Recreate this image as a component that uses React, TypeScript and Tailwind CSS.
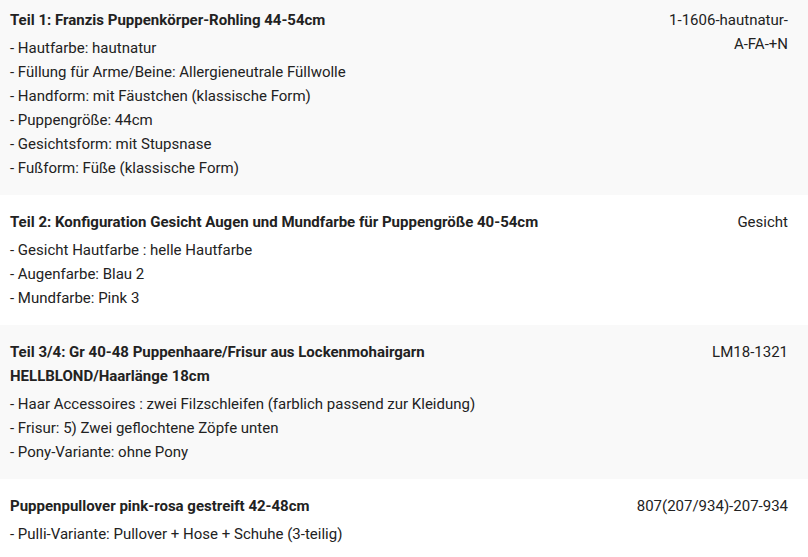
import React from 'react';

interface Part {
  title: string[];
  items: string[];
  code: string[];
}

const parts: Part[] = [
  {
    title: ['Teil 1: Franzis Puppenkörper-Rohling 44-54cm'],
    items: [
      '- Hautfarbe: hautnatur',
      '- Füllung für Arme/Beine: Allergieneutrale Füllwolle',
      '- Handform: mit Fäustchen (klassische Form)',
      '- Puppengröße: 44cm',
      '- Gesichtsform: mit Stupsnase',
      '- Fußform: Füße (klassische Form)',
    ],
    code: ['1-1606-hautnatur-', 'A-FA-+N'],
  },
  {
    title: ['Teil 2: Konfiguration Gesicht Augen und Mundfarbe für Puppengröße 40-54cm'],
    items: ['- Gesicht Hautfarbe : helle Hautfarbe', '- Augenfarbe: Blau 2', '- Mundfarbe: Pink 3'],
    code: ['Gesicht'],
  },
  {
    title: ['Teil 3/4: Gr 40-48 Puppenhaare/Frisur aus Lockenmohairgarn', 'HELLBLOND/Haarlänge 18cm'],
    items: [
      '- Haar Accessoires : zwei Filzschleifen (farblich passend zur Kleidung)',
      '- Frisur: 5) Zwei geflochtene Zöpfe unten',
      '- Pony-Variante: ohne Pony',
    ],
    code: ['LM18-1321'],
  },
  {
    title: ['Puppenpullover pink-rosa gestreift 42-48cm'],
    items: ['- Pulli-Variante: Pullover + Hose + Schuhe (3-teilig)'],
    code: ['807(207/934)-207-934'],
  },
];

const App: React.FC = () => {
  return (
    <div
      className="w-[808px] h-[557px] overflow-hidden bg-white text-[15px] leading-[24px] text-[#222222]"
      style={{ fontFamily: 'Roboto, "Liberation Sans", sans-serif' }}
    >
      <div className="-mt-[7px]">
        {parts.map((part, i) => (
          <div
            key={i}
            className={`flex justify-between py-[15px] pl-[10px] pr-[20px] ${i % 2 === 0 ? 'bg-[#f9f9f9]' : 'bg-white'}`}
          >
            <div className="flex-1">
              <div className="font-bold">
                {part.title.map((t, j) => (
                  <div key={j}>{t}</div>
                ))}
              </div>
              <div className="mt-1">
                {part.items.map((item, j) => (
                  <div key={j}>{item}</div>
                ))}
              </div>
            </div>
            <div className="w-[160px] text-right">
              {part.code.map((c, j) => (
                <div key={j}>{c}</div>
              ))}
            </div>
          </div>
        ))}
      </div>
    </div>
  );
};

export default App;
